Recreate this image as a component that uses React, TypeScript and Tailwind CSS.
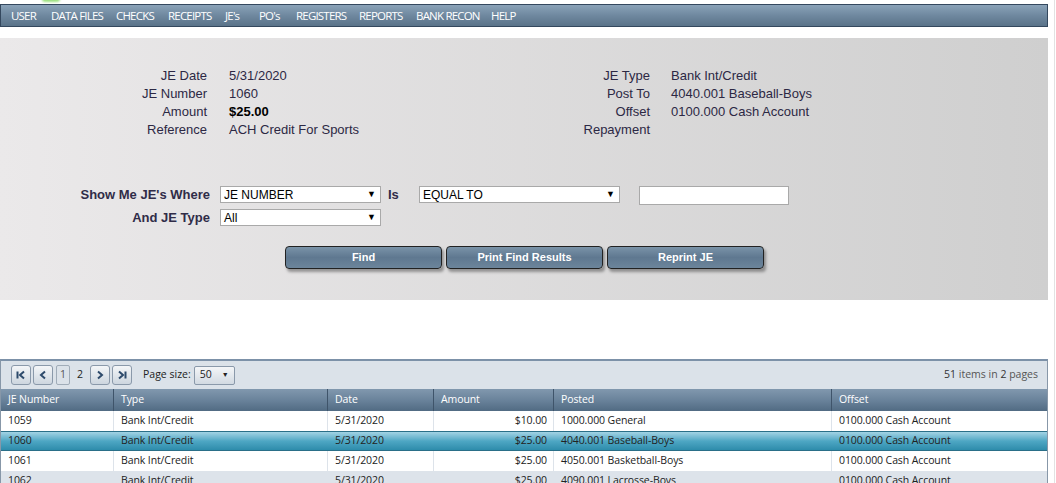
import React from "react";

const navItems = [
  { name: "USER", w: "w-[40px]" },
  { name: "DATA FILES", w: "w-[65px]" },
  { name: "CHECKS", w: "w-[52px]" },
  { name: "RECEIPTS", w: "w-[57px]" },
  { name: "JE's", w: "w-[34px]" },
  { name: "PO's", w: "w-[37px]" },
  { name: "REGISTERS", w: "w-[63px]" },
  { name: "REPORTS", w: "w-[57px]" },
  { name: "BANK RECON", w: "w-[75px]" },
  { name: "HELP", w: "w-[40px]" },
];

const leftInfo = [
  { label: "JE Date", value: "5/31/2020" },
  { label: "JE Number", value: "1060" },
  { label: "Amount", value: "$25.00", bold: true },
  { label: "Reference", value: "ACH Credit For Sports" },
];

const rightInfo = [
  { label: "JE Type", value: "Bank Int/Credit" },
  { label: "Post To", value: "4040.001 Baseball-Boys" },
  { label: "Offset", value: "0100.000 Cash Account" },
  { label: "Repayment", value: "" },
];

const columns = [
  { name: "JE Number", w: "w-[112px]" },
  { name: "Type", w: "w-[214px]" },
  { name: "Date", w: "w-[106px]" },
  { name: "Amount", w: "w-[120px]" },
  { name: "Posted", w: "w-[278px]" },
  { name: "Offset", w: "flex-1" },
];

const rows = [
  ["1059", "Bank Int/Credit", "5/31/2020", "$10.00", "1000.000 General", "0100.000 Cash Account"],
  ["1060", "Bank Int/Credit", "5/31/2020", "$25.00", "4040.001 Baseball-Boys", "0100.000 Cash Account"],
  ["1061", "Bank Int/Credit", "5/31/2020", "$25.00", "4050.001 Basketball-Boys", "0100.000 Cash Account"],
  ["1062", "Bank Int/Credit", "5/31/2020", "$25.00", "4090.001 Lacrosse-Boys", "0100.000 Cash Account"],
];

const Select: React.FC<{ value: string; w: string }> = ({ value, w }) => (
  <div className={`${w} h-[17px] bg-white border border-[#a9a9a9] flex items-center justify-between pl-[3px] pr-[4px] text-[12px] font-normal text-black`}>
    <span>{value}</span>
    <span className="text-[9px]">▼</span>
  </div>
);

const PagerBtn: React.FC<{ children: React.ReactNode }> = ({ children }) => (
  <div className="w-[20px] h-[20px] rounded-[3px] border border-[#8a99aa] bg-gradient-to-b from-[#f4f6f8] to-[#cdd6df] flex items-center justify-center text-[#2d4a6b]">
    {children}
  </div>
);

const FirstIcon = () => (
  <svg width="10" height="10" viewBox="0 0 10 10"><path d="M1.5 1.5v7" stroke="#2d4a6b" strokeWidth="2" /><path d="M8 1.5 4 5l4 3.5" stroke="#2d4a6b" strokeWidth="2" fill="none" /></svg>
);
const PrevIcon = () => (
  <svg width="10" height="10" viewBox="0 0 10 10"><path d="M7 1.5 3 5l4 3.5" stroke="#2d4a6b" strokeWidth="2" fill="none" /></svg>
);
const NextIcon = () => (
  <svg width="10" height="10" viewBox="0 0 10 10"><path d="M3 1.5 7 5l-4 3.5" stroke="#2d4a6b" strokeWidth="2" fill="none" /></svg>
);
const LastIcon = () => (
  <svg width="10" height="10" viewBox="0 0 10 10"><path d="M2 1.5 6 5l-4 3.5" stroke="#2d4a6b" strokeWidth="2" fill="none" /><path d="M8.5 1.5v7" stroke="#2d4a6b" strokeWidth="2" /></svg>
);

const ActionButton: React.FC<{ label: string }> = ({ label }) => (
  <div className="w-[157px] h-[23px] rounded-[4px] border border-[#222] bg-gradient-to-b from-[#7a93a8] via-[#5f7890] to-[#6c859b] shadow-[2px_3px_3px_rgba(0,0,0,0.35)] flex items-center justify-center text-white text-[11px] font-bold">
    {label}
  </div>
);

export default function App() {
  return (
    <div className="w-[1056px] h-[483px] overflow-hidden bg-white relative" style={{ fontFamily: "Arial, 'Liberation Sans', sans-serif" }}>
      <div className="absolute left-[42px] top-[-4px] w-[18px] h-[6px] rounded-full bg-[#9be07e] blur-[1px]" />
      <div className="pt-[4px] w-[1048px]">
        {/* top menu */}
        <div className="h-[23px] border border-[#34485e] bg-gradient-to-b from-[#8aa2b8] via-[#6f889f] to-[#5a7389] flex items-center pl-[10px] text-white text-[11.5px] tracking-[-0.8px]" style={{ fontFamily: "'Open Sans', sans-serif" }}>
          {navItems.map((n) => (
            <span key={n.name} className={`${n.w} whitespace-nowrap`}>{n.name}</span>
          ))}
        </div>

        {/* detail panel */}
        <div className="mt-[11px] h-[262px] bg-gradient-to-r from-[#ebe9ea] to-[#cfcfcf] flex flex-col">
          <div className="flex pt-[29px] text-[13px] text-[#2c2844]">
            <div className="flex flex-col gap-[1px] w-[530px]">
              {leftInfo.map((r) => (
                <div key={r.label} className="flex h-[17px] items-center">
                  <span className="w-[207px] text-right">{r.label}</span>
                  <span className={`ml-[22px] ${r.bold ? "font-bold text-black" : ""}`}>{r.value}</span>
                </div>
              ))}
            </div>
            <div className="flex flex-col gap-[1px]">
              {rightInfo.map((r) => (
                <div key={r.label} className="flex h-[17px] items-center">
                  <span className="w-[120px] text-right">{r.label}</span>
                  <span className="ml-[21px]">{r.value}</span>
                </div>
              ))}
            </div>
          </div>

          <div className="mt-[48px] flex flex-col gap-[6px] text-[13px] font-bold text-[#302c48]">
            <div className="flex items-center h-[17px]">
              <span className="w-[210px] text-right">Show Me JE's Where</span>
              <div className="ml-[10px]"><Select value="JE NUMBER" w="w-[161px]" /></div>
              <span className="ml-[7px] w-[31px]">Is</span>
              <Select value="EQUAL TO" w="w-[201px]" />
              <div className="ml-[19px] w-[150px] h-[19px] bg-white border border-[#a9a9a9] mt-[2px]" />
            </div>
            <div className="flex items-center h-[17px]">
              <span className="w-[210px] text-right">And JE Type</span>
              <div className="ml-[10px]"><Select value="All" w="w-[161px]" /></div>
            </div>
          </div>

          <div className="mt-[20px] ml-[285px] flex gap-[4px]">
            <ActionButton label="Find" />
            <ActionButton label="Print Find Results" />
            <ActionButton label="Reprint JE" />
          </div>
        </div>

        {/* grid */}
        <div className="mt-[59px] border border-[#8797a8] border-t-[2px] border-t-[#7c91a8]" style={{ fontFamily: "'Open Sans', sans-serif" }}>
          <div className="h-[28px] bg-[#dbe2e9] flex items-center pl-[10px] text-[10.5px] text-[#222]">
            <div className="flex items-center gap-[2px]">
              <PagerBtn><FirstIcon /></PagerBtn>
              <PagerBtn><PrevIcon /></PagerBtn>
              <div className="w-[14px] h-[20px] border border-[#a0acb8] rounded-[2px] flex items-center justify-center text-[#555] ml-[1px]">1</div>
              <span className="w-[16px] text-center">2</span>
              <PagerBtn><NextIcon /></PagerBtn>
              <PagerBtn><LastIcon /></PagerBtn>
            </div>
            <span className="ml-[11px]">Page size:</span>
            <div className="ml-[3px] w-[41px] h-[19px] border border-[#8a99aa] rounded-[2px] bg-gradient-to-b from-[#f4f6f8] to-[#d2dae2] flex items-center justify-between px-[5px]">
              <span>50</span>
              <span className="text-[7px]">▼</span>
            </div>
            <span className="ml-auto pr-[9px] text-[#333]">51 <span className="text-[#555]">items in</span> 2 <span className="text-[#555]">pages</span></span>
          </div>
          <div className="h-[22px] bg-gradient-to-b from-[#8198ae] via-[#6a839b] to-[#516b83] flex text-white text-[10.5px] tracking-[-0.1px]">
            {columns.map((c, i) => (
              <div key={c.name} className={`${c.w} flex items-center pl-[7px] ${i > 0 ? "border-l border-[#3f546a]" : ""}`}>{c.name}</div>
            ))}
          </div>
          {rows.map((r, ri) => {
            const sel = ri === 1;
            const bg = sel
              ? "bg-gradient-to-b from-[#a2d3e4] via-[#4ea7c4] to-[#2d8cab] border-y border-[#2a6f88]"
              : ri === 3
              ? "bg-[#dde3ea]"
              : "bg-white";
            return (
              <div key={r[0]} className={`h-[20px] flex text-[10.5px] tracking-[-0.1px] text-[#222] ${bg}`}>
                {r.map((cell, ci) => (
                  <div
                    key={ci}
                    className={`${columns[ci].w} flex items-center ${ci === 3 ? "justify-end pr-[6px]" : "pl-[7px]"} ${ci > 0 && !sel ? "border-l border-[#dde3ea]" : ""} ${ci > 0 && sel ? "border-l border-transparent" : ""}`}
                  >
                    {cell}
                  </div>
                ))}
              </div>
            );
          })}
        </div>
      </div>
      <div className="absolute right-[1px] top-0 h-full w-px bg-[#e2e2e2]" />
    </div>
  );
}
